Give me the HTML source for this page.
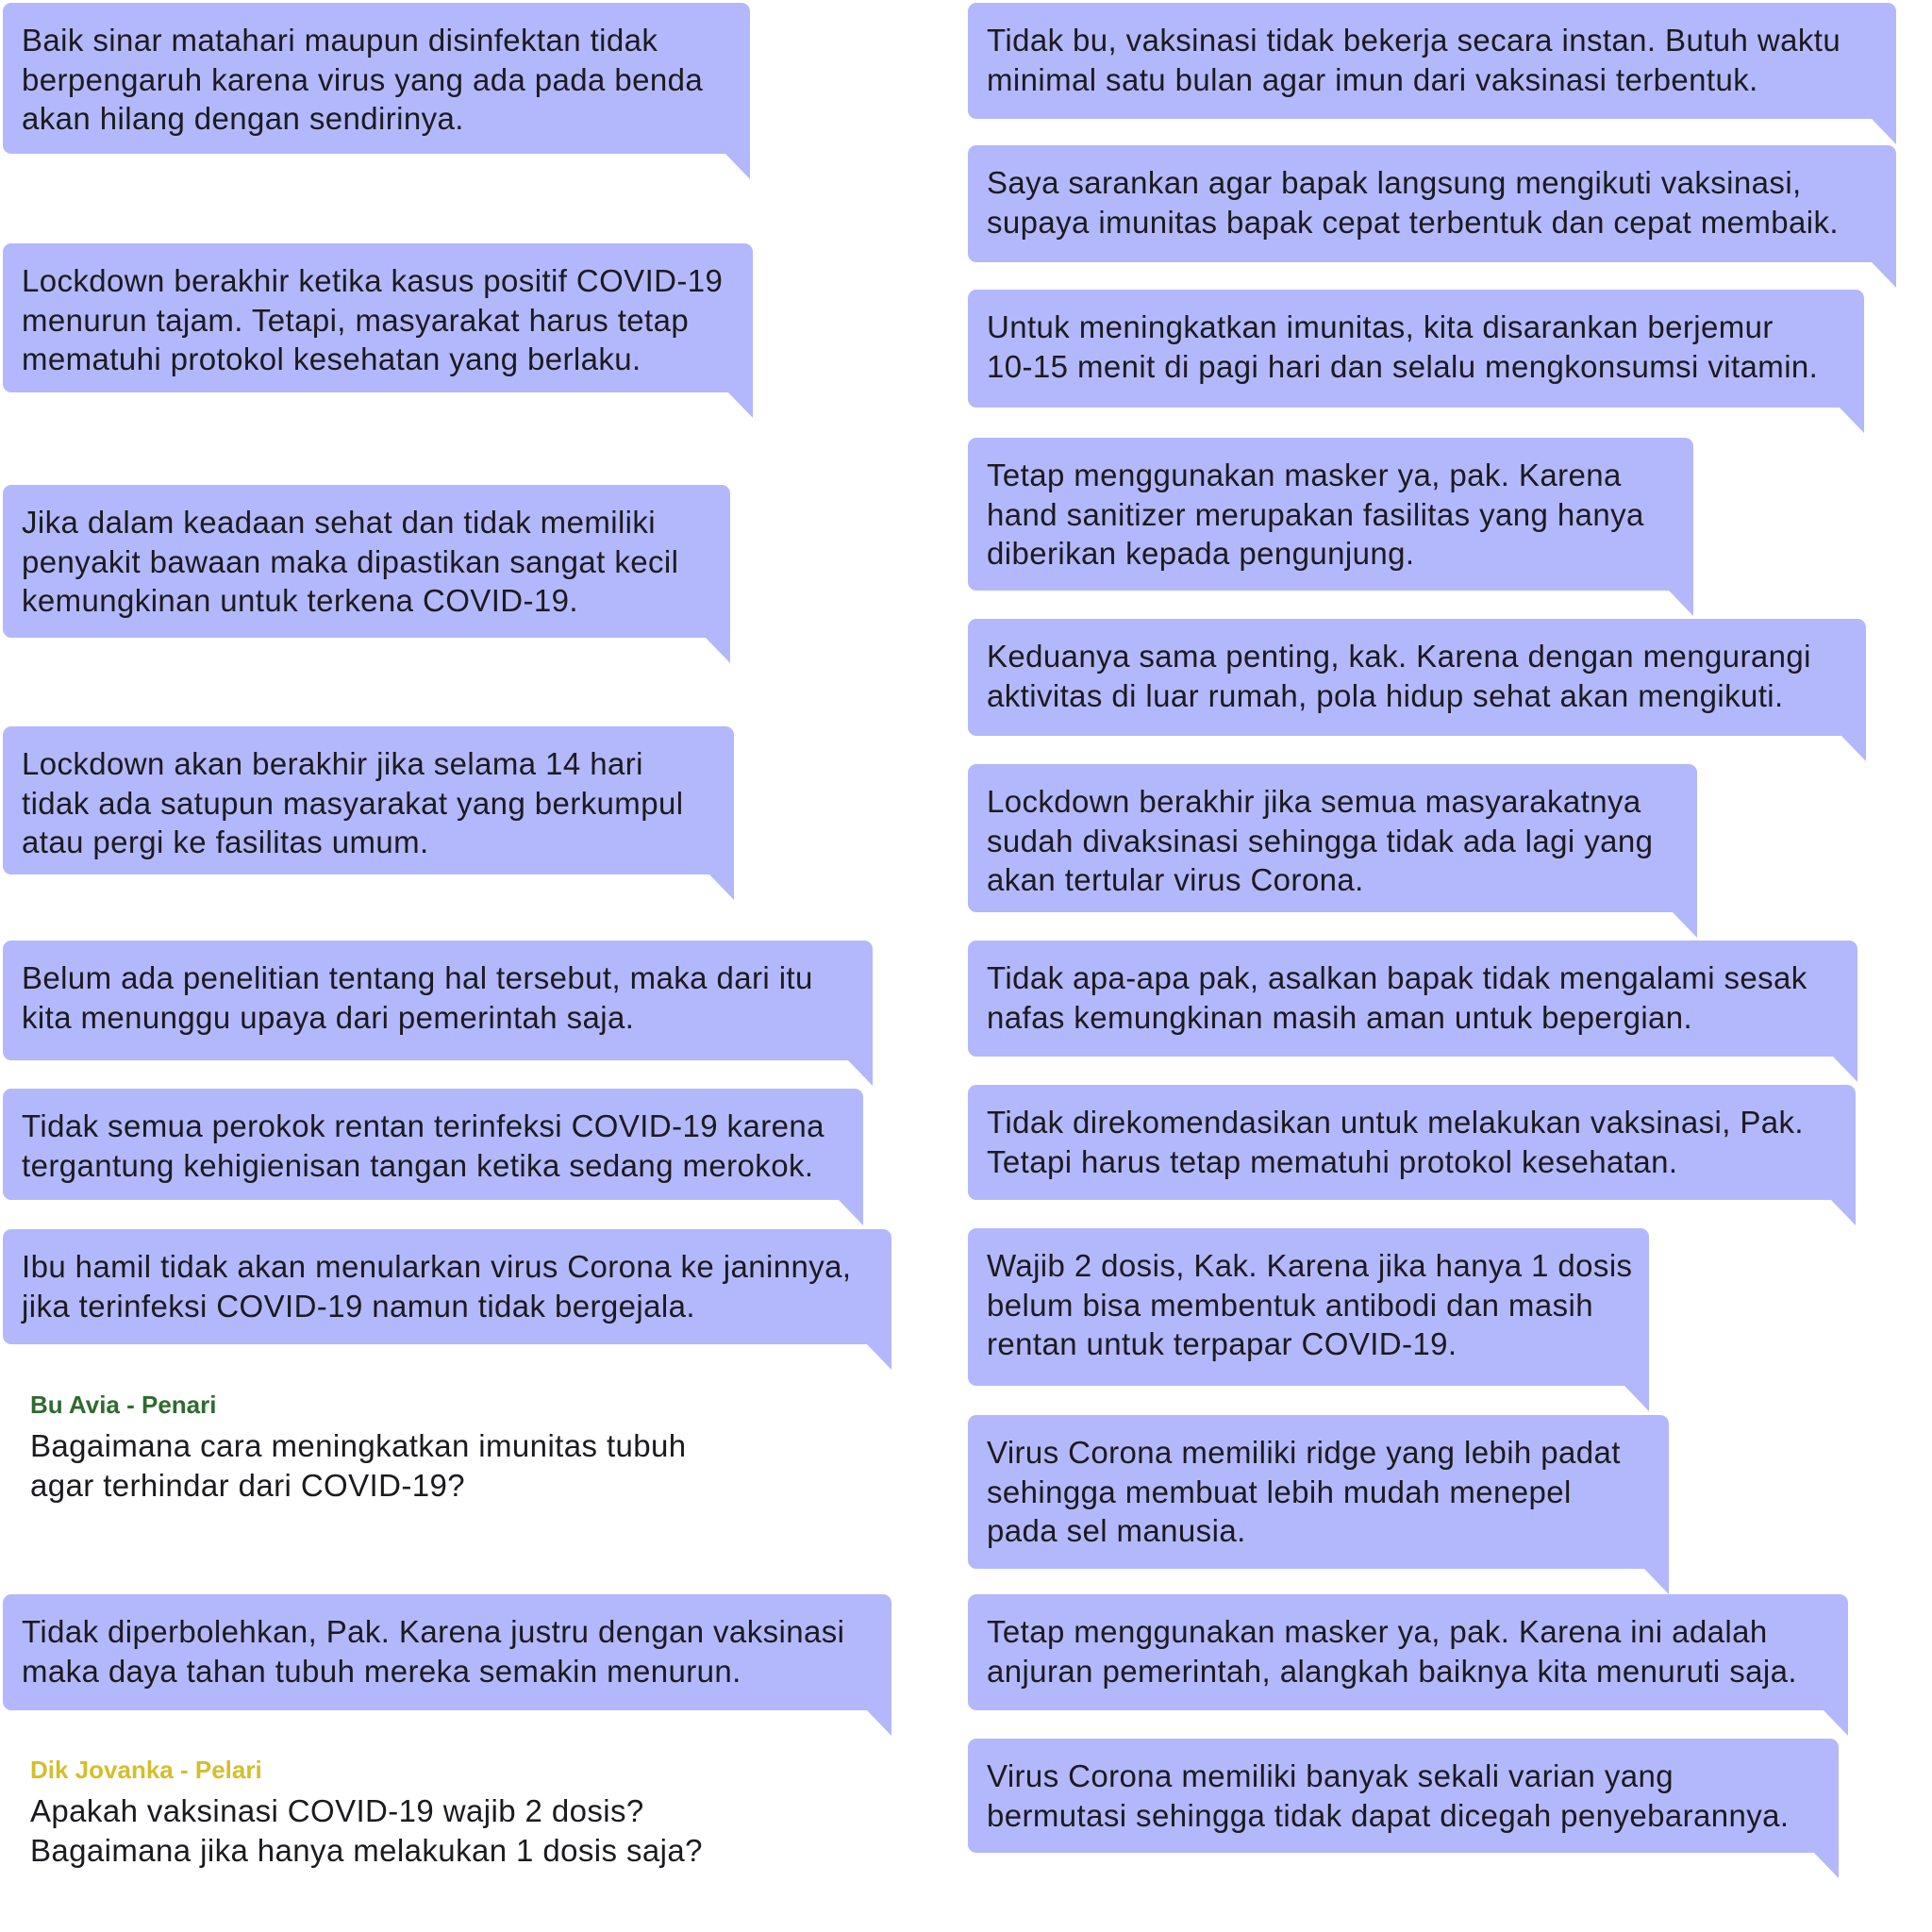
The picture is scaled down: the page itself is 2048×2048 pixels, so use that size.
<!DOCTYPE html>
<html><head><meta charset="utf-8"><style>
html,body{margin:0;padding:0;background:#fff;}
body{width:2048px;height:2048px;position:relative;overflow:hidden;font-family:"Liberation Sans",sans-serif;color:#1b1b1f;}
.b{position:absolute;background:#b3b8fc;border-radius:9px 9px 0 9px;box-sizing:border-box;padding:19px 20px 0 20px;font-size:33px;line-height:41.5px;white-space:nowrap;letter-spacing:0.4px;}
.b::after{content:"";position:absolute;right:0;top:100%;width:26px;height:27px;background:#b3b8fc;clip-path:polygon(0 0,100% 0,100% 100%);}
.lab{position:absolute;left:32px;font-weight:bold;font-size:26px;line-height:28px;}
.q{position:absolute;left:32px;font-size:33px;line-height:41.5px;white-space:nowrap;letter-spacing:0.4px;}
.r{left:1026px !important;}
</style></head><body>
<div class="b" style="left:3px;top:3px;width:792px;height:160px">Baik sinar matahari maupun disinfektan tidak<br>berpengaruh karena virus yang ada pada benda<br>akan hilang dengan sendirinya.</div>
<div class="b" style="left:3px;top:258px;width:795px;height:158px">Lockdown berakhir ketika kasus positif COVID-19<br>menurun tajam. Tetapi, masyarakat harus tetap<br>mematuhi protokol kesehatan yang berlaku.</div>
<div class="b" style="left:3px;top:514px;width:771px;height:162px">Jika dalam keadaan sehat dan tidak memiliki<br>penyakit bawaan maka dipastikan sangat kecil<br>kemungkinan untuk terkena COVID-19.</div>
<div class="b" style="left:3px;top:770px;width:775px;height:157px">Lockdown akan berakhir jika selama 14 hari<br>tidak ada satupun masyarakat yang berkumpul<br>atau pergi ke fasilitas umum.</div>
<div class="b" style="left:3px;top:997px;width:922px;height:127px">Belum ada penelitian tentang hal tersebut, maka dari itu<br>kita menunggu upaya dari pemerintah saja.</div>
<div class="b" style="left:3px;top:1154px;width:912px;height:118px">Tidak semua perokok rentan terinfeksi COVID-19 karena<br>tergantung kehigienisan tangan ketika sedang merokok.</div>
<div class="b" style="left:3px;top:1303px;width:942px;height:122px">Ibu hamil tidak akan menularkan virus Corona ke janinnya,<br>jika terinfeksi COVID-19 namun tidak bergejala.</div>
<div class="lab" style="top:1475px;color:#2f6b2f">Bu Avia - Penari</div>
<div class="q" style="top:1512px">Bagaimana cara meningkatkan imunitas tubuh<br>agar terhindar dari COVID-19?</div>
<div class="b" style="left:3px;top:1690px;width:942px;height:123px">Tidak diperbolehkan, Pak. Karena justru dengan vaksinasi<br>maka daya tahan tubuh mereka semakin menurun.</div>
<div class="lab" style="top:1862px;color:#d6bd2c">Dik Jovanka - Pelari</div>
<div class="q" style="top:1899px">Apakah vaksinasi COVID-19 wajib 2 dosis?<br>Bagaimana jika hanya melakukan 1 dosis saja?</div>

<div class="b r" style="top:3px;width:984px;height:123px">Tidak bu, vaksinasi tidak bekerja secara instan. Butuh waktu<br>minimal satu bulan agar imun dari vaksinasi terbentuk.</div>
<div class="b r" style="top:154px;width:984px;height:124px">Saya sarankan agar bapak langsung mengikuti vaksinasi,<br>supaya imunitas bapak cepat terbentuk dan cepat membaik.</div>
<div class="b r" style="top:307px;width:950px;height:125px">Untuk meningkatkan imunitas, kita disarankan berjemur<br>10-15 menit di pagi hari dan selalu mengkonsumsi vitamin.</div>
<div class="b r" style="top:464px;width:769px;height:162px">Tetap menggunakan masker ya, pak. Karena<br>hand sanitizer merupakan fasilitas yang hanya<br>diberikan kepada pengunjung.</div>
<div class="b r" style="top:656px;width:952px;height:124px">Keduanya sama penting, kak. Karena dengan mengurangi<br>aktivitas di luar rumah, pola hidup sehat akan mengikuti.</div>
<div class="b r" style="top:810px;width:773px;height:157px">Lockdown berakhir jika semua masyarakatnya<br>sudah divaksinasi sehingga tidak ada lagi yang<br>akan tertular virus Corona.</div>
<div class="b r" style="top:997px;width:943px;height:123px">Tidak apa-apa pak, asalkan bapak tidak mengalami sesak<br>nafas kemungkinan masih aman untuk bepergian.</div>
<div class="b r" style="top:1150px;width:941px;height:122px">Tidak direkomendasikan untuk melakukan vaksinasi, Pak.<br>Tetapi harus tetap mematuhi protokol kesehatan.</div>
<div class="b r" style="top:1302px;width:722px;height:167px">Wajib 2 dosis, Kak. Karena jika hanya 1 dosis<br>belum bisa membentuk antibodi dan masih<br>rentan untuk terpapar COVID-19.</div>
<div class="b r" style="top:1500px;width:743px;height:163px">Virus Corona memiliki ridge yang lebih padat<br>sehingga membuat lebih mudah menepel<br>pada sel manusia.</div>
<div class="b r" style="top:1690px;width:933px;height:123px">Tetap menggunakan masker ya, pak. Karena ini adalah<br>anjuran pemerintah, alangkah baiknya kita menuruti saja.</div>
<div class="b r" style="top:1843px;width:923px;height:121px">Virus Corona memiliki banyak sekali varian yang<br>bermutasi sehingga tidak dapat dicegah penyebarannya.</div>
</body></html>
